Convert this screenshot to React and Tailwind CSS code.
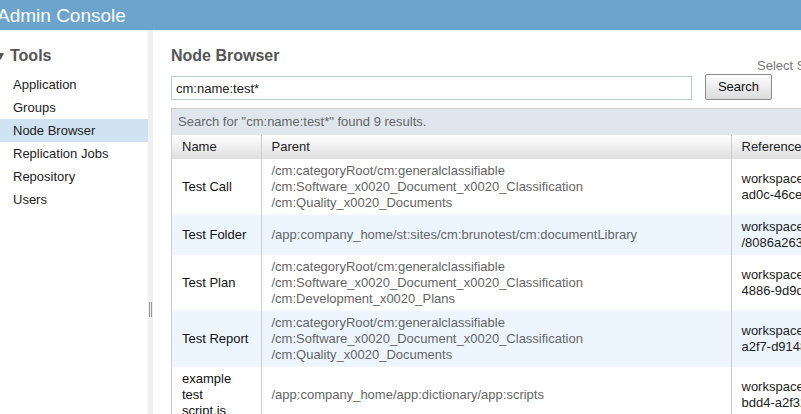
import React from 'react';

const navItems = ['Application', 'Groups', 'Node Browser', 'Replication Jobs', 'Repository', 'Users'];

const rows = [
  {
    name: ['Test Call'],
    parent: [
      '/cm:categoryRoot/cm:generalclassifiable',
      '/cm:Software_x0020_Document_x0020_Classification',
      '/cm:Quality_x0020_Documents',
    ],
    ref: ['workspace://SpacesStore/3c6e0b1a-', 'ad0c-46ce-9a1e-1d9b'],
  },
  {
    name: ['Test Folder'],
    parent: ['/app:company_home/st:sites/cm:brunotest/cm:documentLibrary'],
    ref: ['workspace://SpacesStore', '/8086a263-1f0c-4a3b'],
  },
  {
    name: ['Test Plan'],
    parent: [
      '/cm:categoryRoot/cm:generalclassifiable',
      '/cm:Software_x0020_Document_x0020_Classification',
      '/cm:Development_x0020_Plans',
    ],
    ref: ['workspace://SpacesStore/72b4d1f0-', '4886-9d9d-2a4f'],
  },
  {
    name: ['Test Report'],
    parent: [
      '/cm:categoryRoot/cm:generalclassifiable',
      '/cm:Software_x0020_Document_x0020_Classification',
      '/cm:Quality_x0020_Documents',
    ],
    ref: ['workspace://SpacesStore/5e1c9b3d-', 'a2f7-d9148c0e'],
  },
  {
    name: ['example', 'test', 'script.js'],
    parent: ['/app:company_home/app:dictionary/app:scripts'],
    ref: ['workspace://SpacesStore/9f3a1c2e-', 'bdd4-a2f32b1c'],
  },
];

export default function App() {
  return (
    <div className="w-[801px] h-[414px] overflow-hidden bg-white flex flex-col font-['Liberation_Sans',Arial,sans-serif] text-[13px]">
      <header className="h-[30px] shrink-0 bg-[#6ca4cc] flex items-center">
        <span className="ml-[-3px] text-[19px] leading-none text-white">Admin Console</span>
      </header>

      <div className="flex flex-1 min-h-0">
        {/* sidebar */}
        <aside className="w-[148px] shrink-0 pt-[16px]">
          <div className="flex items-center gap-[6px] h-[20px]">
            <svg width="4" height="7" viewBox="0 0 4 7" className="mt-[1px]">
              <polygon points="-3,0 4,0 0.5,7" fill="#555" />
            </svg>
            <span className="text-[16px] font-bold text-[#555]">Tools</span>
          </div>
          <ul className="mt-[7px]">
            {navItems.map((item) => (
              <li
                key={item}
                className={`h-[23px] flex items-center pl-[13px] text-[#222] ${
                  item === 'Node Browser' ? 'bg-[#d0e3f2]' : ''
                }`}
              >
                {item}
              </li>
            ))}
          </ul>
        </aside>

        {/* splitter */}
        <div className="w-[5px] shrink-0 bg-[#f0f0f0] flex items-center justify-center">
          <div className="flex gap-[1px] mt-[175px] h-[15px]">
            <div className="w-[1px] bg-[#999]" />
            <div className="w-[1px] bg-[#999]" />
          </div>
        </div>

        {/* main */}
        <main className="flex-1 min-w-0 pl-[18px] pt-[16px]">
          <h1 className="text-[16px] font-bold text-[#555] leading-[20px]">Node Browser</h1>
          <div className="mt-[-8px] h-[16px] pl-[586px] leading-[16px] text-[#777] whitespace-nowrap">
            Select Store
          </div>
          <div className="flex items-end">
            <input
              readOnly
              value="cm:name:test*"
              className="shrink-0 w-[521px] h-[24px] border border-[#b9cad9] px-[4px] text-[13px] text-[#222] outline-none"
            />
            <button className="shrink-0 ml-[13px] w-[67px] h-[26px] rounded-[2px] border border-[#8a8a8a] bg-gradient-to-b from-[#fdfdfd] to-[#dcdcdc] text-[13px] text-[#111]">
              Search
            </button>
          </div>

          <div className="mt-[8px] w-[900px] border-l border-t border-[#ccc]">
            <div className="h-[26px] bg-[#dfe6ee] flex items-center pl-[6px] text-[#666]">
              Search for "cm:name:test*" found 9 results.
            </div>
            <table className="border-collapse">
              <thead>
                <tr className="h-[24px] bg-gradient-to-b from-white to-[#dedede] text-left text-[#222]">
                  <th className="w-[89px] font-normal pl-[10px] border-r border-[#ccc]">Name</th>
                  <th className="w-[470px] font-normal pl-[10px] border-r border-[#ccc]">Parent</th>
                  <th className="w-[340px] font-normal pl-[10px] whitespace-nowrap">Reference</th>
                </tr>
              </thead>
              <tbody>
                {rows.map((r, i) => (
                  <tr key={i} className={i % 2 === 1 ? 'bg-[#edf5fe]' : 'bg-white'}>
                    <td className="pl-[10px] pr-[4px] py-[4px] leading-[16px] text-[#111] border-r border-[#ccc] align-middle">
                      {r.name.map((n) => (
                        <div key={n} className="whitespace-nowrap">{n}</div>
                      ))}
                    </td>
                    <td className="pl-[10px] py-[4px] leading-[16px] text-[#666] border-r border-[#ccc] align-middle">
                      {r.parent.map((p) => (
                        <div key={p} className="whitespace-nowrap">{p}</div>
                      ))}
                    </td>
                    <td className="pl-[10px] py-[4px] leading-[16px] text-[#222] align-middle">
                      {r.ref.map((p) => (
                        <div key={p} className="whitespace-nowrap">{p}</div>
                      ))}
                    </td>
                  </tr>
                ))}
              </tbody>
            </table>
          </div>
        </main>
      </div>
    </div>
  );
}
